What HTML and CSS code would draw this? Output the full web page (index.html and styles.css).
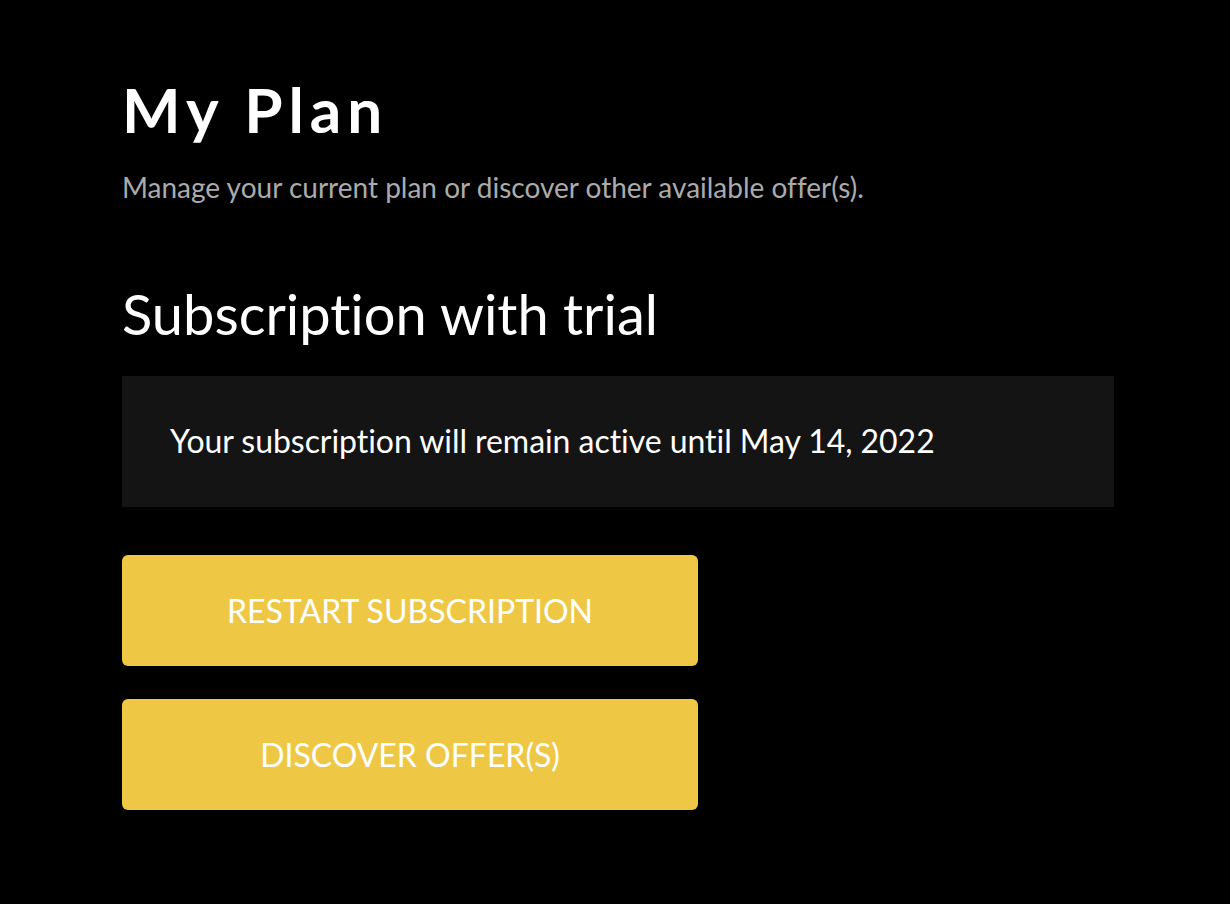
FILE: index.html
```html
<!DOCTYPE html>
<html lang="en">
<head>
    <meta charset="UTF-8">
    <meta name="viewport" content="width=device-width, initial-scale=1.0">
    <title>My Plan</title>
    <link rel="stylesheet" href="styles.css">
</head>
<body>

    <div class="page">
        <h1 class="title">My Plan</h1>
        <p class="subtitle">Manage your current plan or discover other available offer(s).</p>

        <h2 class="plan-name">Subscription with trial</h2>

        <div class="status-box">
            Your subscription will remain active until May 14, 2022
        </div>

        <div class="actions">
            <button class="btn">RESTART SUBSCRIPTION</button>
            <button class="btn">DISCOVER OFFER(S)</button>
        </div>
    </div>

</body>
</html>
```

FILE: styles.css
```css
body {
    font-family: Lato, "Open Sans", sans-serif;
    font-variant-ligatures: none;
    margin: 0;
    background-color: #000;
    color: #fff;
}
.page {
    max-width: 992px;
    padding: 72px 116px 0 122px;
}
.title {
    font-size: 62px;
    font-weight: 700;
    letter-spacing: 6px;
    line-height: 74px;
    margin: 0;
}
.subtitle {
    font-size: 28px;
    color: #ababab;
    margin: 24px 0 0;
    line-height: 34px;
}
.plan-name {
    font-size: 56px;
    font-weight: 400;
    line-height: 67px;
    margin: 76px 0 0;
}
.status-box {
    background: #141414;
    margin-top: 29px;
    padding: 47px 48px 49px;
    font-size: 32px;
    letter-spacing: -0.05px;
    line-height: 35px;
}
.actions {
    display: flex;
    flex-direction: column;
    gap: 33px;
    margin-top: 48px;
    width: 576px;
}
.btn {
    height: 111px;
    background-color: #eec844;
    color: #fff;
    border: none;
    border-radius: 6px;
    font-family: Lato, "Open Sans", sans-serif;
    font-variant-ligatures: none;
    font-size: 32px;
    cursor: pointer;
}
```
